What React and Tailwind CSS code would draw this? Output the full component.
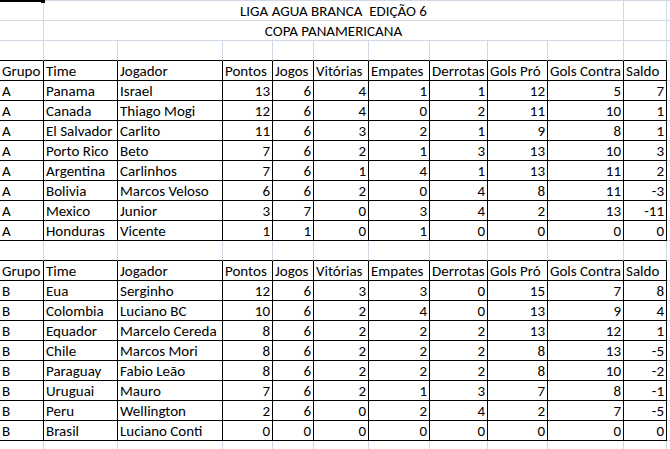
import React from 'react';

const widths = ['w-[44px]', 'w-[74px]', 'w-[105px]', 'w-[50px]', 'w-[41px]', 'w-[55px]', 'w-[61px]', 'w-[58px]', 'w-[60px]', 'w-[76px]', 'w-[43px]'];

const header = ['Grupo', 'Time', 'Jogador', 'Pontos', 'Jogos', 'Vitórias', 'Empates', 'Derrotas', 'Gols Pró', 'Gols Contra', 'Saldo'];

const grupoA = [
  ['A', 'Panama', 'Israel', 13, 6, 4, 1, 1, 12, 5, 7],
  ['A', 'Canada', 'Thiago Mogi', 12, 6, 4, 0, 2, 11, 10, 1],
  ['A', 'El Salvador', 'Carlito', 11, 6, 3, 2, 1, 9, 8, 1],
  ['A', 'Porto Rico', 'Beto', 7, 6, 2, 1, 3, 13, 10, 3],
  ['A', 'Argentina', 'Carlinhos', 7, 6, 1, 4, 1, 13, 11, 2],
  ['A', 'Bolivia', 'Marcos Veloso', 6, 6, 2, 0, 4, 8, 11, -3],
  ['A', 'Mexico', 'Junior', 3, 7, 0, 3, 4, 2, 13, -11],
  ['A', 'Honduras', 'Vicente', 1, 1, 0, 1, 0, 0, 0, 0],
];

const grupoB = [
  ['B', 'Eua', 'Serginho', 12, 6, 3, 3, 0, 15, 7, 8],
  ['B', 'Colombia', 'Luciano BC', 10, 6, 2, 4, 0, 13, 9, 4],
  ['B', 'Equador', 'Marcelo Cereda', 8, 6, 2, 2, 2, 13, 12, 1],
  ['B', 'Chile', 'Marcos Mori', 8, 6, 2, 2, 2, 8, 13, -5],
  ['B', 'Paraguay', 'Fabio Leão', 8, 6, 2, 2, 2, 8, 10, -2],
  ['B', 'Uruguai', 'Mauro', 7, 6, 2, 1, 3, 7, 8, -1],
  ['B', 'Peru', 'Wellington', 2, 6, 0, 2, 4, 2, 7, -5],
  ['B', 'Brasil', 'Luciano Conti', 0, 0, 0, 0, 0, 0, 0, 0],
];

// plain grid row (no table borders), optionally with black bottom line
const BlankRow = ({ blackBottom }) => (
  <div className="flex h-[20px]">
    {widths.map((w, i) => (
      <div
        key={i}
        className={`${w} shrink-0 border-r border-r-[#d0d7e5] border-b ${blackBottom ? 'border-b-black' : 'border-b-[#d0d7e5]'}`}
      />
    ))}
    <div className="flex-1 border-b border-b-[#d0d7e5]" />
  </div>
);

const TableRow = ({ cells, isHeader }) => (
  <div className="flex h-[20px]">
    {cells.map((c, i) => {
      const numeric = !isHeader && i > 2;
      return (
        <div
          key={i}
          className={`${widths[i]} shrink-0 border-r border-b border-black overflow-hidden whitespace-nowrap leading-[20px] ${numeric ? 'text-right pr-[2px]' : 'text-left pl-[2px]'}`}
        >
          {c}
        </div>
      );
    })}
    <div className="flex-1 border-b border-b-[#d0d7e5]" />
  </div>
);

const TitleRow = ({ text }) => (
  <div className="flex h-[20px]">
    <div className="w-[44px] shrink-0 border-r border-b border-[#d0d7e5]" />
    <div className="w-[580px] shrink-0 border-r border-b border-[#d0d7e5] text-center leading-[20px] whitespace-pre">
      {text}
    </div>
    <div className="w-[43px] shrink-0 border-r border-b border-[#d0d7e5]" />
    <div className="flex-1 border-b border-b-[#d0d7e5]" />
  </div>
);

export default function App() {
  return (
    <div
      className="relative w-[670px] h-[449px] overflow-hidden bg-white text-black text-[15px]"
      style={{ fontFamily: 'Carlito, Calibri, Lato, sans-serif' }}
    >
      <div className="h-px bg-[#d0d7e5]" />
      <TitleRow text="LIGA AGUA BRANCA  EDIÇÃO 6" />
      <TitleRow text="COPA PANAMERICANA" />
      <BlankRow blackBottom />
      <TableRow cells={header} isHeader />
      {grupoA.map((r, i) => (
        <TableRow key={i} cells={r} />
      ))}
      <BlankRow blackBottom />
      <TableRow cells={header} isHeader />
      {grupoB.map((r, i) => (
        <TableRow key={i} cells={r} />
      ))}
      <BlankRow />

      {/* selection border of the cell above, with fill handle */}
      <div className="absolute left-0 top-0 w-[41px] h-[2px] bg-black" />
      <div className="absolute left-[41px] top-0 w-[4px] h-[3px] bg-black" />
    </div>
  );
}
